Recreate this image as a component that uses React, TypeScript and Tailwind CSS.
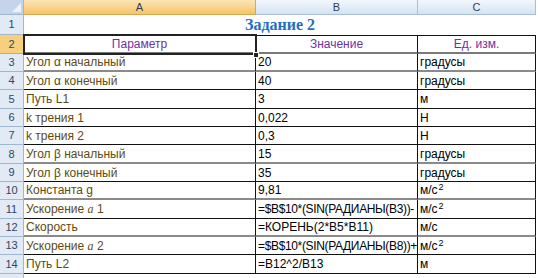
import React from "react";

type Row = { a: string; b: string; c: React.ReactNode; h: number; line: "black" | "grey" };

const sq = <span className="text-[9px] leading-none relative -top-[4px] ml-[1px]">2</span>;

const rows: Row[] = [
  { a: "Угол α начальный", b: "20", c: "градусы", h: 18, line: "grey" },
  { a: "Угол α конечный", b: "40", c: "градусы", h: 18, line: "black" },
  { a: "Путь L1", b: "3", c: "м", h: 19, line: "black" },
  { a: "k трения 1", b: "0,022", c: "Н", h: 18, line: "black" },
  { a: "k трения 2", b: "0,3", c: "Н", h: 18, line: "black" },
  { a: "Угол β начальный", b: "15", c: "градусы", h: 19, line: "grey" },
  { a: "Угол β конечный", b: "35", c: "градусы", h: 18, line: "black" },
  { a: "Константа g", b: "9,81", c: <span>м/с{sq}</span>, h: 18, line: "grey" },
  { a: "Ускорение a 1", b: "=$B$10*(SIN(РАДИАНЫ(B3))-", c: <span>м/с{sq}</span>, h: 19, line: "black" },
  { a: "Скорость", b: "=КОРЕНЬ(2*B5*B11)", c: "м/с", h: 18, line: "grey" },
  { a: "Ускорение a 2", b: "=$B$10*(SIN(РАДИАНЫ(B8))+", c: <span>м/с{sq}</span>, h: 18, line: "black" },
  { a: "Путь L2", b: "=B12^2/B13", c: "м", h: 19, line: "black" },
];

function renderA(s: string) {
  if (s.startsWith("Ускорение a")) {
    const n = s.slice(-1);
    return (
      <span className="whitespace-pre">
        {"Ускорение "}
        <span className="italic" style={{ fontFamily: "'Liberation Serif', serif" }}>
          a
        </span>
        {" " + n}
      </span>
    );
  }
  return s;
}

export default function App() {
  const font = { fontFamily: "'Liberation Sans', Arial, sans-serif" };
  return (
    <div className="w-[538px] h-[278px] bg-white overflow-hidden relative text-[12px]" style={font}>
      {/* column headers */}
      <div className="flex h-[15px]">
        <div className="w-[24px] h-full bg-[#c4d5eb] border-r border-b border-[#9eb6ce] relative">
          <div className="absolute right-[2px] bottom-[2px] w-0 h-0 border-l-[9px] border-l-transparent border-b-[9px] border-b-[#eef3fa]" />
        </div>
        <div className="w-[232px] h-full bg-gradient-to-b from-[#fbe5b4] to-[#f5c469] border-r border-b border-[#e0a64a] flex items-center justify-center text-[11px] text-[#2c3f56]">A</div>
        <div className="w-[162px] h-full bg-gradient-to-b from-[#f3f7fc] to-[#d5e2f2] border-r border-b border-[#a9bfd8] flex items-center justify-center text-[11px] text-[#2c3f56]">B</div>
        <div className="w-[118px] h-full bg-gradient-to-b from-[#f3f7fc] to-[#d5e2f2] border-r border-b border-[#a9bfd8] flex items-center justify-center text-[11px] text-[#2c3f56]">C</div>
      </div>

      {/* row 1 */}
      <div className="flex h-[20px]">
        <div className="w-[24px] h-full bg-[#e2eaf6] border-r border-b border-[#9eb6ce] flex items-center justify-center text-[11px] text-[#2d4765]">1</div>
        <div className="w-[512px] h-full flex items-center justify-center">
          <span className="font-bold text-[16px] text-[#1f6fc5]" style={{ fontFamily: "'Liberation Serif', serif" }}>Задание 2</span>
        </div>
      </div>

      {/* row 2 */}
      <div className="flex h-[19px]">
        <div className="w-[24px] h-full bg-[#f7cf7d] border-r border-b border-[#e0a64a] flex items-center justify-center text-[11px] text-[#2d4765]">2</div>
        <div className="w-[232px] h-full border-r border-[#111] border-t border-t-[#111] border-b-2 border-b-[#7a7a7a] flex items-center justify-center text-[#7030a0]">Параметр</div>
        <div className="w-[162px] h-full border-r border-[#111] border-t border-t-[#111] border-b-2 border-b-[#7a7a7a] flex items-center justify-center text-[#7030a0]">Значение</div>
        <div className="w-[118px] h-full border-r border-[#111] border-t border-t-[#111] border-b-2 border-b-[#7a7a7a] flex items-center justify-center text-[#7030a0]">Ед. изм.</div>
      </div>

      {rows.map((r, i) => {
        const line = r.line === "black" ? "border-b border-b-[#111]" : "border-b-2 border-b-[#8a8a8a]";
        const formula = r.b.startsWith("=$");
        return (
          <div key={i} className="flex" style={{ height: r.h }}>
            <div className="w-[24px] h-full bg-[#e2eaf6] border-r border-b border-[#9eb6ce] flex items-center justify-center text-[11px] text-[#2d4765]">{i + 3}</div>
            <div className={`w-[232px] h-full border-r border-r-[#111] ${line} flex items-center pl-[2px] text-[#5e4b10] whitespace-nowrap overflow-hidden`}>{renderA(r.a)}</div>
            <div className={`w-[162px] h-full border-r border-r-[#111] ${line} flex items-center pl-[2px] text-black whitespace-nowrap overflow-hidden ${formula ? "tracking-[-0.35px]" : ""}`}>{r.b}</div>
            <div className={`w-[118px] h-full border-r border-r-[#111] ${line} flex items-center pl-[2px] text-black whitespace-nowrap overflow-hidden`}>{r.c}</div>
          </div>
        );
      })}

      <div className="flex h-[10px]">
        <div className="w-[24px] h-full bg-[#e2eaf6] border-r border-[#9eb6ce]" />
      </div>

      {/* active cell A2 */}
      <div className="absolute left-[23px] top-[34px] w-[234px] h-[21px] border-2 border-[#222] pointer-events-none" />
      <div className="absolute left-[253px] top-[52px] w-[6px] h-[6px] bg-[#222] border border-white pointer-events-none" />
    </div>
  );
}
